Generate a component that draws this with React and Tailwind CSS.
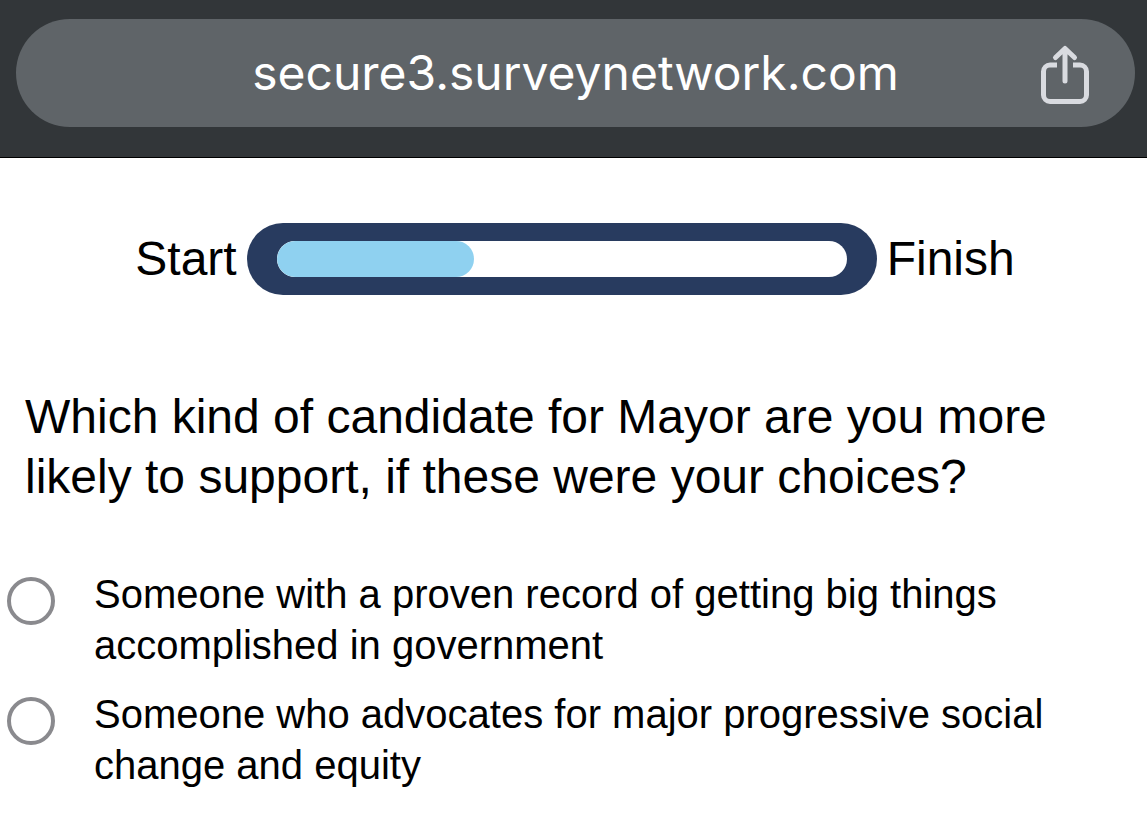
function ShareIcon() {
  return (
    <svg viewBox="0 0 50 64" className="h-16 w-[50px]" fill="none" stroke="#d9dbe0" strokeWidth="5" strokeLinejoin="round" aria-hidden="true">
      <path d="M17 24H10a6.5 6.5 0 0 0-6.5 6.5V54a6.5 6.5 0 0 0 6.5 6.5h30a6.5 6.5 0 0 0 6.5-6.5V30.5A6.5 6.5 0 0 0 40 24h-7" />
      <path d="M25 40V8M15.5 16.5 25 7.5l9.5 9" strokeLinecap="round" />
    </svg>
  )
}

function AddressBar() {
  return (
    <header className="border-b border-black bg-[#323639] pt-[19px] pr-3 pb-[30px] pl-4">
      <div className="grid h-[108px] grid-cols-[96px_1fr_96px] items-center rounded-full bg-[#5f6468]">
        <span />
        <span className="text-center font-[Inter,sans-serif] text-5xl leading-[60px] text-white">secure3.surveynetwork.com</span>
        <button type="button" aria-label="Share" className="justify-self-end pr-[45px]">
          <ShareIcon />
        </button>
      </div>
    </header>
  )
}

function Progress({ value }) {
  return (
    <div className="flex items-center justify-center gap-[10px] pl-[3px] text-5xl">
      <span>Start</span>
      <div className="h-[72px] w-[630px] rounded-full bg-[#283b5f] px-[30px] py-[18px]">
        <div
          role="progressbar"
          aria-label="Survey progress"
          aria-valuenow={value}
          className="h-9 overflow-hidden rounded-full bg-white"
        >
          <div className="h-full rounded-full bg-[#8fd1f0]" style={{ width: `${value}%` }} />
        </div>
      </div>
      <span>Finish</span>
    </div>
  )
}

const options = [
  'Someone with a proven record of getting big things accomplished in government',
  'Someone who advocates for major progressive social change and equity',
]

export default function App() {
  return (
    <div className="bg-white font-['Liberation_Sans',Arial,sans-serif] text-black">
      <AddressBar />
      <main className="pt-[65px]">
        <Progress value={34.7} />
        <fieldset className="mt-[92px]">
          <legend className="px-[25px] text-5xl leading-[60px]">
            Which kind of candidate for Mayor are you more likely to support, if these were your choices?
          </legend>
          <div className="mt-[62px] flex flex-col gap-[18px]">
            {options.map((text, i) => (
              <label key={text} className="flex items-start gap-[39px] pr-[25px] pl-[7px] text-[40px] leading-[51px]">
                <input
                  type="radio"
                  name="candidate"
                  value={i}
                  className="mt-2 size-12 shrink-0 appearance-none rounded-full border-4 border-[#8a8a8e] bg-white checked:border-[14px] checked:border-[#283b5f]"
                />
                <span>{text}</span>
              </label>
            ))}
          </div>
        </fieldset>
      </main>
    </div>
  )
}
